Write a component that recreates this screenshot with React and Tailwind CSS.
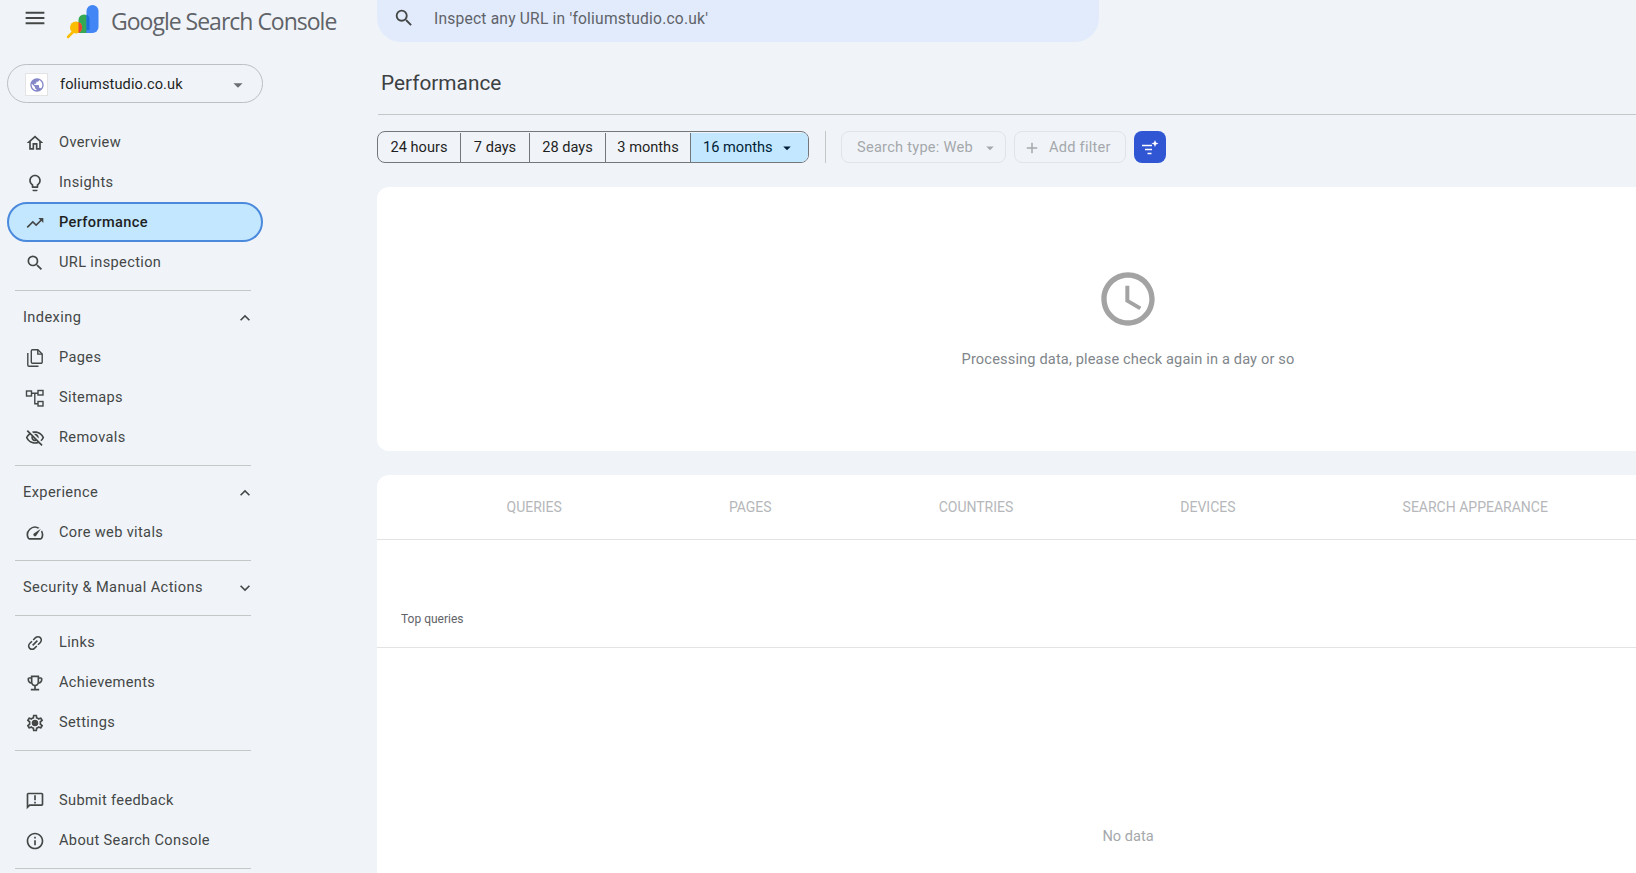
import React from "react";
import {
  MdMenu,
  MdOutlineHome,
  MdOutlineLightbulb,
  MdTrendingUp,
  MdSearch,
  MdOutlineVisibilityOff,
  MdOutlineSpeed,
  MdLink,
  MdOutlineEmojiEvents,
  MdOutlineSettings,
  MdOutlineAnnouncement,
  MdInfoOutline,
  MdExpandLess,
  MdExpandMore,
  MdArrowDropDown,
  MdAdd,
  MdAccessTime,
  MdPublic,
} from "react-icons/md";

const PagesIcon = ({ className }) => (
  <svg viewBox="0 0 20 20" className={className} fill="none" stroke="currentColor" strokeWidth="1.4">
    <path d="M7.500 1.700h5.300l4.400 4.400v8a1.200 1.200 0 0 1-1.200 1.200H7.500a1.200 1.200 0 0 1-1.200-1.200V2.900a1.200 1.200 0 0 1 1.200-1.200z" />
    <path d="M12.800 1.700v4.400h4.400" />
    <path d="M2.800 5v12a1.200 1.200 0 0 0 1.200 1.200h9.500" />
  </svg>
);

const SitemapIcon = ({ className }) => (
  <svg viewBox="0 0 20 20" className={className} fill="none" stroke="currentColor" strokeWidth="1.4">
    <rect x="1.500" y="3" width="5" height="5" />
    <rect x="13" y="2.500" width="5" height="4.500" />
    <rect x="13" y="13.500" width="5" height="4.500" />
    <path d="M6.500 5.200H13M9.800 5.200v10.500H13" />
  </svg>
);

const LinkIcon = ({ className }) => <MdLink className={`${className} -rotate-45`} />;

const GearIcon = ({ className }) => (
  <span className={`relative inline-flex ${className}`}>
    <MdOutlineSettings className="w-full h-full" />
    <span className="absolute inset-[36%] rounded-full bg-current" />
  </span>
);

const Logo = () => (
  <svg viewBox="66 2 36 36" className="w-[36px] h-[36px] shrink-0">
    <path d="M78.500 32V19a5.500 5.500 0 0 1 11 0v13z" fill="#34a853" />
    <rect x="86.500" y="4" width="12" height="28" rx="6" fill="#4285f4" />
    <path d="M86.500 13.500a5.500 5.500 0 0 1 3 5.500v13h-3z" fill="#1a6fd8" />
    <path d="M92 32h-5.500v-3h5.500z" fill="#4285f4" />
    <path d="M68 36l5-5" stroke="#fbbc04" strokeWidth="2.500" strokeLinecap="round" />
    <circle cx="76" cy="26.500" r="6" fill="#fbbc04" />
    <path d="M78.500 21a6 6 0 0 1 0 11z" fill="#ea4335" />
  </svg>
);

const NavRow = ({ icon: Icon, label, active }) => (
  <div
    className={
      active
        ? "flex items-center h-10 pt-[2px] pl-[16px] rounded-full border-2 border-[#4a89dc] bg-[#c2e7ff] text-[#1f1f1f] font-medium"
        : "flex items-center h-10 pt-[2px] pl-[18px] text-[#444746]"
    }
  >
    <Icon className="w-[20px] h-[20px] shrink-0 text-[#444746]" />
    <span className="ml-[14px] text-[14.6px] tracking-[0.35px]">{label}</span>
  </div>
);

const SectionHead = ({ label, open }) => (
  <div className="flex items-center justify-between h-10 pt-[2px] pl-[16px] pr-[8px] text-[#444746]">
    <span className="text-[14.6px] tracking-[0.4px]">{label}</span>
    {open ? <MdExpandLess className="w-[20px] h-[20px]" /> : <MdExpandMore className="w-[20px] h-[20px]" />}
  </div>
);

const Divider = () => <div className="h-px bg-[#c4c7c5] ml-2 mr-3 mt-2 mb-[6px]" />;

const ranges = [
  { label: "24 hours", width: "w-[83px]" },
  { label: "7 days", width: "w-[69px]" },
  { label: "28 days", width: "w-[76px]" },
  { label: "3 months", width: "w-[85px]" },
];

const tabs = ["QUERIES", "PAGES", "COUNTRIES", "DEVICES", "SEARCH APPEARANCE"];

const Sidebar = () => (
  <aside className="w-[377px] shrink-0">
    <div className="flex items-center h-[42px] pl-[25px]">
      <MdMenu className="w-[20px] h-[20px] -mt-[6px] text-[#444746] scale-125" />
      <div className="ml-[21px]">
        <Logo />
      </div>
      <span className="ml-[9px] text-[23px] text-[#5f6368] font-['Open_Sans',sans-serif] tracking-[-1px]">
        Google Search Console
      </span>
    </div>
    <div className="w-[256px] ml-[7px] mt-[22px]">
      <div className="flex items-center h-[39px] pt-[2px] rounded-full border border-[#bcbfc3] pl-[17px] pr-[13px] mb-[19px]">
        <div className="flex items-center justify-center w-[23px] h-[23px] bg-white border border-[#e3e3e3]">
          <MdPublic className="w-[16px] h-[16px] text-[#8487c8]" />
        </div>
        <span className="ml-[12px] flex-1 text-[14.6px] tracking-[0.1px] text-[#1f1f1f]">
          foliumstudio.co.uk
        </span>
        <MdArrowDropDown className="w-[22px] h-[22px] text-[#6b6e72]" />
      </div>

      <NavRow icon={MdOutlineHome} label="Overview" />
      <NavRow icon={MdOutlineLightbulb} label="Insights" />
      <NavRow icon={MdTrendingUp} label="Performance" active />
      <NavRow icon={MdSearch} label="URL inspection" />
      <Divider />
      <SectionHead label="Indexing" open />
      <NavRow icon={PagesIcon} label="Pages" />
      <NavRow icon={SitemapIcon} label="Sitemaps" />
      <NavRow icon={MdOutlineVisibilityOff} label="Removals" />
      <Divider />
      <SectionHead label="Experience" open />
      <NavRow icon={MdOutlineSpeed} label="Core web vitals" />
      <Divider />
      <SectionHead label="Security & Manual Actions" />
      <Divider />
      <NavRow icon={LinkIcon} label="Links" />
      <NavRow icon={MdOutlineEmojiEvents} label="Achievements" />
      <NavRow icon={GearIcon} label="Settings" />
      <div className="h-px bg-[#c4c7c5] ml-2 mr-3 mt-2 mb-[29px]" />
      <NavRow icon={MdOutlineAnnouncement} label="Submit feedback" />
      <NavRow icon={MdInfoOutline} label="About Search Console" />
      <div className="h-px bg-[#c4c7c5] ml-2 mr-3 mt-2" />
    </div>
  </aside>
);

const FilterBar = () => (
  <div className="flex items-center mt-4 text-[14.6px]">
    <div className="flex h-8 w-[432px] pt-px rounded-lg border border-[#74777a] overflow-hidden text-[#1f1f1f]">
      {ranges.map((r) => (
        <div key={r.label} className={`flex items-center justify-center border-r border-[#74777a] ${r.width}`}>
          {r.label}
        </div>
      ))}
      <div className="flex flex-1 items-center pl-[12px] bg-[#c2e7ff] text-[#001d35]">
        16 months
        <MdArrowDropDown className="ml-[5px] w-[18px] h-[18px]" />
      </div>
    </div>
    <div className="w-px h-8 bg-[#c4c7c5] ml-[16px]" />
    <div className="flex items-center h-8 w-[165px] ml-[15px] pt-px pl-[15px] rounded-lg border border-[#e1e3e6] text-[#a5a8ab] tracking-[0.25px]">
      Search type: Web
      <MdArrowDropDown className="ml-[8px] w-[18px] h-[18px]" />
    </div>
    <div className="flex items-center h-8 w-[112px] ml-[8px] pt-px pl-[8px] rounded-lg border border-[#e1e3e6] text-[#a5a8ab] tracking-[0.25px]">
      <MdAdd className="w-[18px] h-[18px]" />
      <span className="ml-[8px]">Add filter</span>
    </div>
    <div className="flex items-center justify-center w-8 h-8 ml-[8px] rounded-lg bg-[#3056d3]">
      <svg viewBox="0 0 20 20" className="w-[20px] h-[20px]" fill="none" stroke="white" strokeWidth="1.500">
        <path d="M2 8.500h10M5 12.500h7M7.500 16.500h4" />
        <path d="M15 3l1 2.500 2.500 1-2.500 1-1 2.500-1-2.500-2.500-1 2.500-1z" fill="white" stroke="none" />
      </svg>
    </div>
  </div>
);

export default function App() {
  return (
    <div className="flex h-[873px] overflow-hidden bg-[#f0f4f9] font-['Roboto',sans-serif]">
      <Sidebar />
      <main className="flex-1 min-w-0">
        <div className="flex items-center w-[722px] h-[42px] rounded-b-[24px] bg-[#e1ebfc] pl-[16px]">
          <MdSearch className="w-[22px] h-[22px] -mt-[6px] text-[#444746]" />
          <span className="ml-[19px] -mt-[3px] text-[15.6px] tracking-[0.2px] text-[#5f6368]">
            Inspect any URL in 'foliumstudio.co.uk'
          </span>
        </div>
        <h1 className="mt-[28px] ml-[4px] h-[26px] leading-[26px] text-[20.8px] font-normal text-[#3c4043]">
          Performance
        </h1>
        <div className="h-px bg-[#c4c7c5] ml-[1px] mt-[18px]" />
        <FilterBar />

        <section className="mt-6 w-[1502px] h-[264px] rounded-xl bg-white flex flex-col items-center">
          <MdAccessTime className="mt-[80px] w-[64px] h-[64px] text-[#a3a3a3]" />
          <p className="mt-[18px] text-[14.6px] tracking-[0.15px] text-[#80868b]">
            Processing data, please check again in a day or so
          </p>
        </section>

        <section className="mt-6 w-[1502px] h-[398px] rounded-t-xl bg-white flex flex-col">
          <div className="flex items-center h-[65px] border-b border-[#e3e3e3] pl-[46px] text-[14px] text-[#b5b7ba]">
            {tabs.map((tab) => (
              <span key={tab} className="px-[83.500px] whitespace-nowrap">
                {tab}
              </span>
            ))}
          </div>
          <div className="flex items-end h-[108px] border-b border-[#e3e3e3] pl-[24px] pb-[20px] text-[12px] leading-4 text-[#5f6368]">
            Top queries
          </div>
          <div className="flex flex-1 items-end justify-center pb-[25px] text-[14.6px] text-[#a5a8ab]">
            No data
          </div>
        </section>
      </main>
    </div>
  );
}
